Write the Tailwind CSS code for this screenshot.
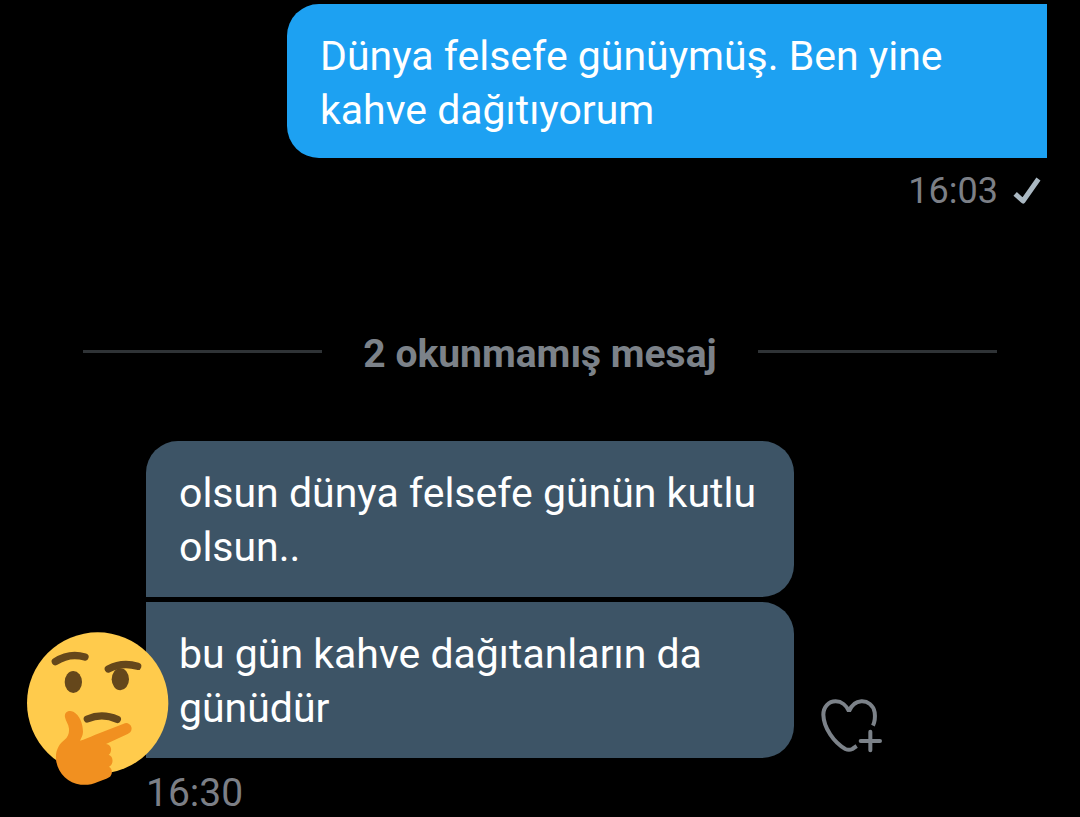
<!DOCTYPE html>
<html lang="tr">

<head>
    <meta charset="UTF-8" />
    <meta
        name="viewport"
        content="width=device-width, initial-scale=1.0"
    />
    <script src="https://cdn.jsdelivr.net/npm/@tailwindcss/browser@4"></script>
    <title>Mesajlar</title>
</head>

<body class="bg-black font-[Roboto,sans-serif] text-[41px] leading-[54px] text-white">

    <main class="pt-1 overflow-x-hidden">

        <!-- sent -->
        <section class="flex flex-col items-end pl-8 pr-[33px]">
            <p class="w-full max-w-[760px] rounded-l-[32px] bg-[#1da1f2] px-[33px] pt-[25px] pb-[21px]">
                Dünya felsefe günüymüş. Ben yine kahve dağıtıyorum
            </p>
            <div class="mt-3 mr-[5px] flex items-center gap-3 text-[36px] leading-[42px] text-[#7c7f86]">
                <time>16:03</time>
                <svg
                    xmlns="http://www.w3.org/2000/svg"
                    fill="none"
                    viewBox="0 0 32 32"
                    class="size-8"
                    role="img"
                    aria-label="Gönderildi"
                >
                    <path
                        stroke="#aab8c2"
                        stroke-width="5"
                        stroke-linecap="square"
                        stroke-linejoin="round"
                        d="M7 20.5 13 26 27 6"
                    />
                </svg>
            </div>
        </section>

        <!-- unread divider -->
        <div class="mt-[115px] flex items-center gap-[41px] px-[83px]">
            <hr class="mb-1.5 grow border-t-3 border-[#2f3336]" />
            <h2 class="text-[39px] leading-[54px] font-bold text-[#7c8289]">2 okunmamış mesaj</h2>
            <hr class="mb-1.5 grow border-t-3 border-[#2f3336]" />
        </div>

        <!-- received -->
        <section class="relative mt-[60px] flex flex-col pl-[146px] pr-8">
            <p class="w-full max-w-[648px] rounded-r-[32px] rounded-tl-[32px] bg-[#3d5466] px-[33px] pt-[25px] pb-[23px]">
                olsun dünya felsefe günün kutlu olsun..
            </p>
            <div class="mt-[5px] flex items-end gap-6">
                <p class="w-full max-w-[648px] rounded-r-[32px] bg-[#3d5466] px-[33px] pt-[25px] pb-[23px]">
                    bu gün kahve dağıtanların da günüdür
                </p>
                <button
                    type="button"
                    class="shrink-0"
                    aria-label="Tepki ekle"
                >
                    <svg
                        xmlns="http://www.w3.org/2000/svg"
                        fill="none"
                        viewBox="54 39 204 195"
                        stroke="#7c8289"
                        stroke-width="12"
                        class="h-[65px] w-[68px]"
                    >
                        <path
                            stroke-linejoin="bevel"
                            d="M219 137C225 124 226 112 224 97C220 75 203 63 184 64C166 65 154 77 147 94C140 77 125 64 107 64C86 64 70 81 70 104C71 144 102 188 136 207Q147 212 157 207L170 198"
                        />
                        <path
                            stroke-linecap="round"
                            d="M211 155V211M182 183H240"
                        />
                    </svg>
                </button>
            </div>
            <time class="mt-3 text-[39px] leading-[46px] text-[#7c7f86]">16:30</time>

            <!-- avatar, overlaps the last bubble -->
            <svg
                xmlns="http://www.w3.org/2000/svg"
                viewBox="51 36 426 459"
                class="absolute bottom-[31px] left-[27px] h-[153px] w-[142px]"
                role="img"
                aria-label="Düşünen yüz"
            >
                <circle cx="263" cy="249" r="212" fill="#ffcb4c" />
                <g fill="#65471b">
                    <ellipse cx="190" cy="186" rx="26" ry="33" />
                    <ellipse cx="331" cy="178" rx="26" ry="33" />
                </g>
                <g
                    fill="none"
                    stroke="#65471b"
                    stroke-width="22"
                    stroke-linecap="round"
                    stroke-linejoin="round"
                >
                    <path d="M136 125Q178 97 225 111" />
                    <path d="M295 147Q337 125 383 139" />
                    <path d="M232 297Q276 278 322 298" />
                </g>
                <path
                    fill="#f19020"
                    d="M165 292C162 275 177 269 190 275C208 284 219 310 219 335C219 345 214 353 210 362C222 359 239 352 254 345L341 311C351 306 361 312 364 321C367 331 361 338 353 342L288 372C298 373 305 382 303 392C302 398 300 401 296 404C306 407 309 418 307 427C306 434 302 438 297 440C306 445 308 458 303 466C301 471 295 474 289 476L263 486C247 493 231 496 212 494C172 490 140 455 138 416C136 391 148 371 163 360C174 352 178 339 177 326C176 313 167 304 165 292Z"
                />
            </svg>
        </section>

    </main>

</body>

</html>
